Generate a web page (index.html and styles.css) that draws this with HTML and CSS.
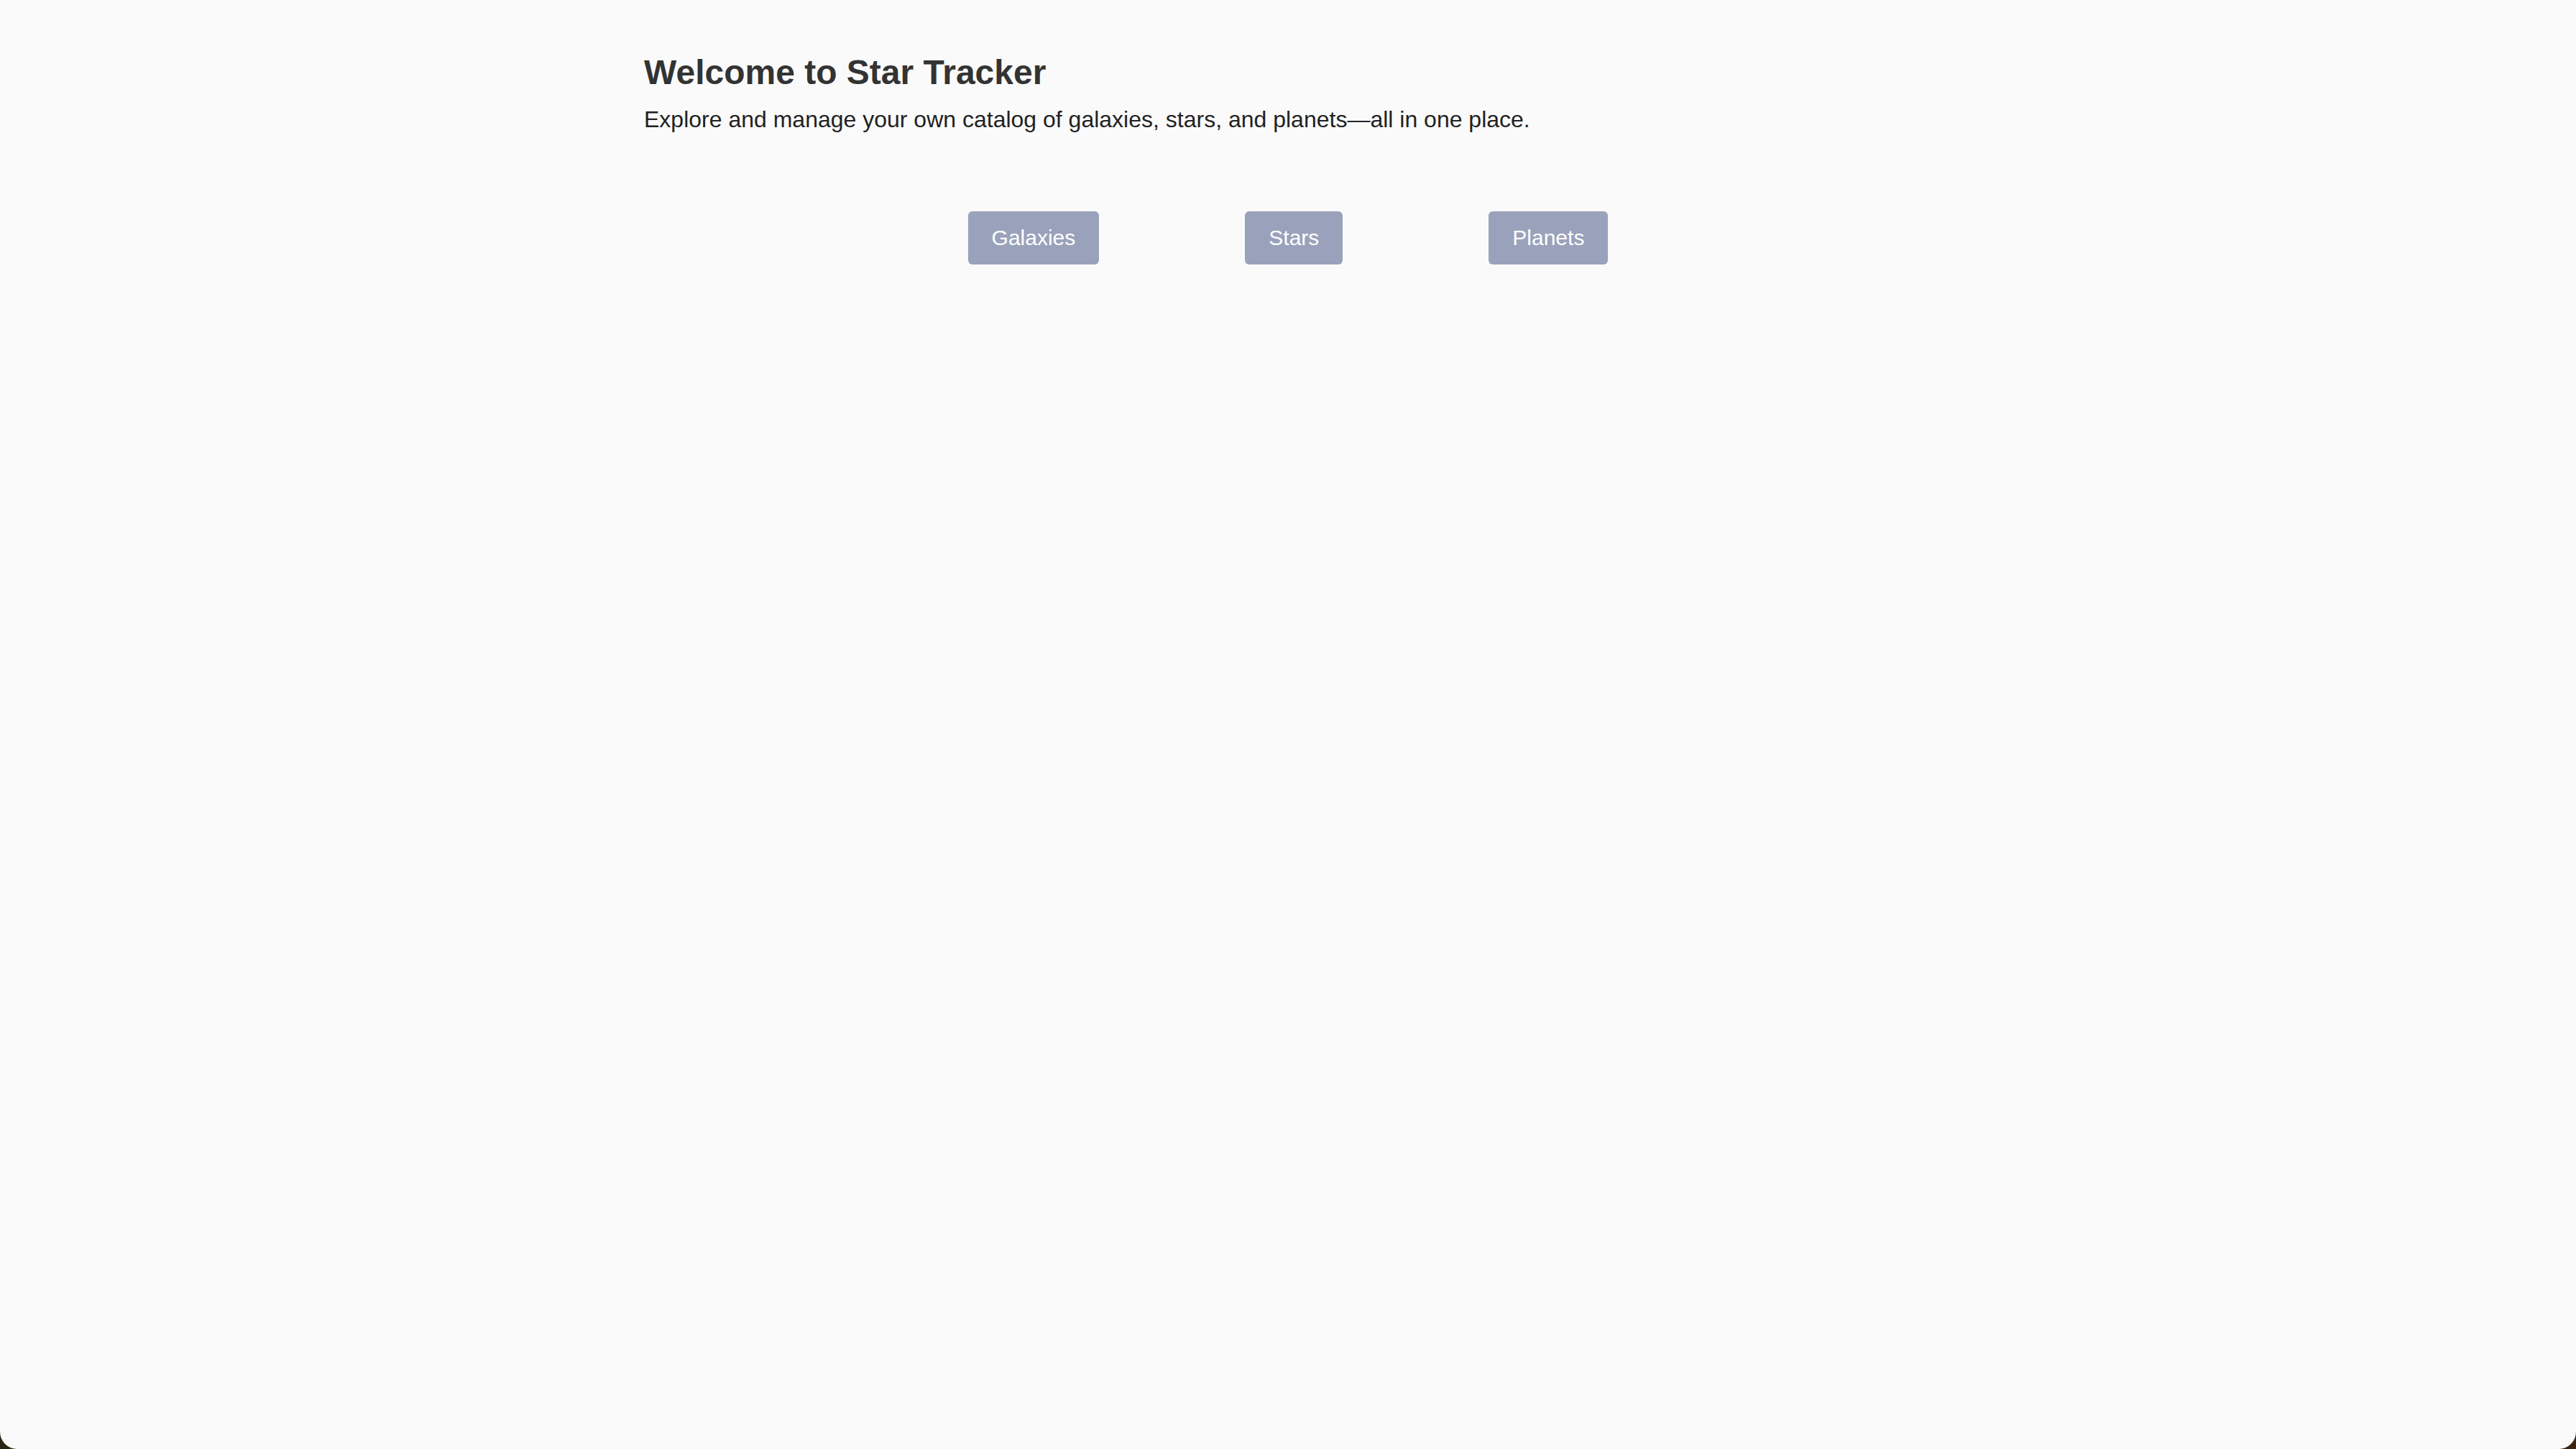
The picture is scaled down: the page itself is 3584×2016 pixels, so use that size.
FILE: index.html
```html
<!DOCTYPE html>
<html lang="en">
<head>
<meta charset="utf-8">
<title>Star Tracker</title>
<link rel="stylesheet" href="styles.css">
</head>
<body>
<div class="window">
  <main class="content">
    <h1 class="title">Welcome to Star Tracker</h1>
    <p class="subtitle">Explore and manage your own catalog of galaxies, stars, and planets—all in one place.</p>
    <nav class="nav">
      <button class="nav-btn">Galaxies</button>
      <button class="nav-btn">Stars</button>
      <button class="nav-btn">Planets</button>
    </nav>
  </main>
</div>
</body>
</html>
```

FILE: styles.css
```css
html, body {
  margin: 0;
  padding: 0;
  height: 100%;
}
body {
  background: linear-gradient(90deg, #2b2614 0%, #3a2a18 60%, #3b2412 100%);
  font-family: "Liberation Sans", Arial, Helvetica, sans-serif;
}
.window {
  height: 2016px;
  background: #fafafa;
  border-radius: 0 0 24px 24px;
  overflow: hidden;
}
.content {
  max-width: 1792px;
  margin: 0 auto;
  padding-top: 72px;
}
.title {
  margin: 0;
  font-size: 48px;
  line-height: 58px;
  font-weight: 700;
  color: #333333;
}
.subtitle {
  margin: 18px 0 0 0;
  font-size: 32px;
  line-height: 37px;
  color: #222222;
}
.nav {
  display: flex;
  justify-content: center;
  gap: 203px;
  margin-top: 109px;
}
.nav-btn {
  display: flex;
  align-items: center;
  justify-content: center;
  height: 74px;
  padding: 0 33px;
  border: none;
  border-radius: 6px;
  background: #9aa2bb;
  color: #ffffff;
  font-family: "Liberation Sans", Arial, Helvetica, sans-serif;
  font-size: 30px;
  cursor: pointer;
}
```
